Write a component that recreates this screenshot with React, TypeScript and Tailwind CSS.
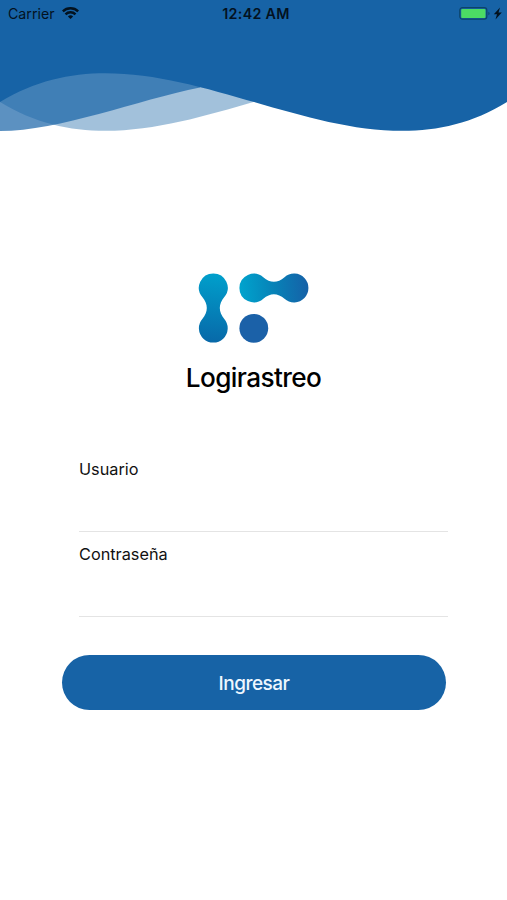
import { useState } from 'react'

const FONT = "font-['Inter','Liberation_Sans',sans-serif]"

function WifiIcon() {
  return (
    <svg width="17" height="12" viewBox="0 0 17 12" fill="none" stroke="#03121f" strokeWidth="2.5">
      <path d="M0.8 4.4C5 0.3 12 0.3 16.2 4.4" />
      <path d="M3.5 7.3C6.3 4.7 10.7 4.7 13.5 7.3" />
      <path d="M5.9 9.4C7.4 8 9.6 8 11.1 9.4L8.5 12Z" fill="#03121f" stroke="none" />
    </svg>
  )
}

function BatteryIcon() {
  return (
    <svg width="45" height="16" viewBox="0 0 45 16">
      <rect x="0.8" y="1.6" width="27" height="11.6" rx="2.6" fill="none" stroke="#0c4468" strokeWidth="1.2" />
      <rect x="2.2" y="2.9" width="24.3" height="9.1" rx="1" fill="#4cdb64" />
      <path d="M29.4 5.8C31 6.4 31 8.6 29.4 9.2Z" fill="#0c4468" />
      <path d="M41 1.4L34.8 8.2H38L36.5 13.6L42.8 6.4H39.5Z" fill="#03121f" />
    </svg>
  )
}

function StatusBar() {
  return (
    <div className="relative grid h-7 grid-cols-3 items-center pr-[3px] pl-2 text-[14px] text-[#03121f]">
      <div className="flex items-center gap-[7px] pb-px">
        <span className="text-[14.2px]">Carrier</span>
        <WifiIcon />
      </div>
      <span className="text-center text-[14.3px] font-semibold tracking-[0.3px] whitespace-nowrap">12:42 AM</span>
      <div className="flex justify-end">
        <BatteryIcon />
      </div>
    </div>
  )
}

function Waves() {
  return (
    <svg className="absolute inset-0" width="507" height="140" viewBox="0 0 507 140" fill="#1763a6">
      <path d="M0 0V102C163 202 344 2 507 102V0Z" opacity="0.4" />
      <path d="M0 0V131C60 131 137 100 200 87.5V0Z" opacity="0.7" />
      <path d="M0 0V102C163 2 346 202 507 102V0Z" />
    </svg>
  )
}

function Logo() {
  return (
    <svg width="112" height="72" viewBox="198 272 112 72">
      <defs>
        <linearGradient id="vertical" gradientUnits="userSpaceOnUse" x1="216" y1="273" x2="210" y2="343">
          <stop offset="0" stopColor="#00a0cc" />
          <stop offset="1" stopColor="#0868a8" />
        </linearGradient>
        <linearGradient id="horizontal" gradientUnits="userSpaceOnUse" x1="239" y1="290" x2="309" y2="286">
          <stop offset="0" stopColor="#00a4ce" />
          <stop offset="0.5" stopColor="#0782b7" />
          <stop offset="1" stopColor="#1660a7" />
        </linearGradient>
      </defs>
      <path
        fill="url(#vertical)"
        d="M213.3 273.4A14.4 14.4 0 0 1 224.3 297.1C218.3 304.2 218.3 311.8 224.3 318.9A14.4 14.4 0 1 1 202.3 318.9C208.3 311.8 208.3 304.2 202.3 297.1A14.4 14.4 0 0 1 213.3 273.4Z"
      />
      <path
        fill="url(#horizontal)"
        d="M239.4 288A14.4 14.4 0 0 1 263.3 277.2C270.2 283.4 277.6 283.4 284.5 277.2A14.4 14.4 0 1 1 284.5 298.8C277.6 292.6 270.2 292.6 263.3 298.8A14.4 14.4 0 0 1 239.4 288Z"
      />
      <circle cx="253.8" cy="328.3" r="14.4" fill="#1b61a8" />
    </svg>
  )
}

interface FieldProps {
  label: string
  type: string
  value: string
  onChange: (value: string) => void
}

function Field({ label, type, value, onChange }: FieldProps) {
  return (
    <label className="block h-[85px] border-b border-[#e4e4e4] pt-[10px] text-[16.3px] leading-6 text-[#111]">
      {label}
      <input
        type={type}
        value={value}
        onChange={(e) => onChange(e.target.value)}
        className="block h-10 w-full bg-transparent outline-none"
      />
    </label>
  )
}

export default function App() {
  const [user, setUser] = useState('')
  const [password, setPassword] = useState('')

  return (
    <div className={`h-[900px] w-[507px] overflow-hidden bg-white ${FONT}`}>
      <header className="relative h-[140px]">
        <Waves />
        <StatusBar />
      </header>

      <main>
        <div className="flex flex-col items-center pt-[132px]">
          <Logo />
          <h1 className="mt-4 text-[26.2px] leading-9 font-medium tracking-[-0.6px] text-black">Logirastreo</h1>
        </div>

        <form className="pt-[51px]" onSubmit={(e) => e.preventDefault()}>
          <div className="ml-[79px] w-[369px]">
            <Field label="Usuario" type="text" value={user} onChange={setUser} />
            <Field label="Contraseña" type="password" value={password} onChange={setPassword} />
          </div>
          <button
            type="submit"
            className="mt-[38px] ml-[62px] block h-[55px] w-[384px] rounded-full bg-[#1763a6] pt-[3px] text-[19px] font-medium tracking-[-0.5px] text-[#eef7ff]"
          >
            Ingresar
          </button>
        </form>
      </main>
    </div>
  )
}
